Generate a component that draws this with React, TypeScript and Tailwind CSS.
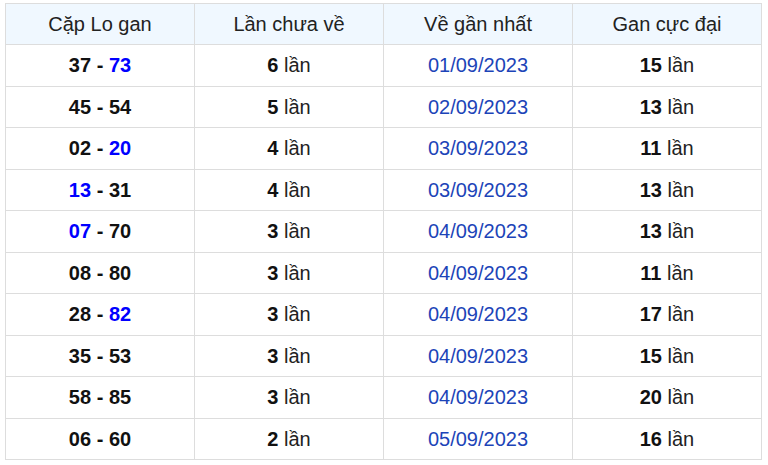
import React from "react";

type Row = {
    a: string;
    b: string;
    hiA?: boolean;
    hiB?: boolean;
    count: number;
    date: string;
    max: number;
};

const rows: Row[] = [
    { a: "37", b: "73", hiB: true, count: 6, date: "01/09/2023", max: 15 },
    { a: "45", b: "54", count: 5, date: "02/09/2023", max: 13 },
    { a: "02", b: "20", hiB: true, count: 4, date: "03/09/2023", max: 11 },
    { a: "13", b: "31", hiA: true, count: 4, date: "03/09/2023", max: 13 },
    { a: "07", b: "70", hiA: true, count: 3, date: "04/09/2023", max: 13 },
    { a: "08", b: "80", count: 3, date: "04/09/2023", max: 11 },
    { a: "28", b: "82", hiB: true, count: 3, date: "04/09/2023", max: 17 },
    { a: "35", b: "53", count: 3, date: "04/09/2023", max: 15 },
    { a: "58", b: "85", count: 3, date: "04/09/2023", max: 20 },
    { a: "06", b: "60", count: 2, date: "05/09/2023", max: 16 },
];

export default function App() {
    return (
        <div className="w-[768px] h-[465px] bg-white pt-[3px] px-[5px] font-['Liberation_Sans',Arial,sans-serif] text-[20px] text-[#222]">
            <table className="w-[757px] border-collapse table-fixed">
                <thead>
                    <tr className="bg-[#f0f8ff] h-[41px]">
                        <th className="border border-[#dddddd] font-normal text-center">Cặp Lo gan</th>
                        <th className="border border-[#dddddd] font-normal text-center">Lần chưa về</th>
                        <th className="border border-[#dddddd] font-normal text-center">Về gần nhất</th>
                        <th className="border border-[#dddddd] font-normal text-center">Gan cực đại</th>
                    </tr>
                </thead>
                <tbody>
                    {rows.map((r, i) => (
                        <tr key={i} className="h-[41.5px]">
                            <td className="border border-[#dddddd] text-center font-bold text-[#111]">
                                <span className={r.hiA ? "text-[#0000ff]" : ""}>{r.a}</span>
                                {" - "}
                                <span className={r.hiB ? "text-[#0000ff]" : ""}>{r.b}</span>
                            </td>
                            <td className="border border-[#dddddd] text-center">
                                <b className="text-[#111]">{r.count}</b> lần
                            </td>
                            <td className="border border-[#dddddd] text-center text-[#1c44b8]">{r.date}</td>
                            <td className="border border-[#dddddd] text-center">
                                <b className="text-[#111]">{r.max}</b> lần
                            </td>
                        </tr>
                    ))}
                </tbody>
            </table>
        </div>
    );
}
